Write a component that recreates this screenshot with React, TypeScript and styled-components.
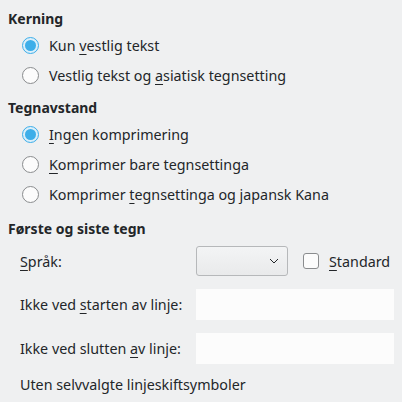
import styled, { createGlobalStyle } from 'styled-components';

const GlobalStyle = createGlobalStyle`
    html, body {
        margin: 0;
        padding: 0;
        background: #eff0f1;
    }
    body {
        font-family: "Noto Sans", "Open Sans", sans-serif;
        font-size: 14.3px;
        color: #232629;
    }
`

const Page = styled.div`
    display: flex;
    flex-direction: column;
    padding: 8px 8px 0 8px;
    width: 402px;
    box-sizing: border-box;
`
const Section = styled.section<{ $gap?: number }>`
    display: flex;
    flex-direction: column;
    margin-top: ${p => p.$gap ?? 0}px;
`
const Heading = styled.h3`
    margin: 0;
    height: 22px;
    line-height: 22px;
    font-size: 14px;
    font-weight: bold;
`
const RadioRow = styled.label`
    display: flex;
    align-items: center;
    height: 30px;
    padding-left: 14px;
    gap: 10px;
`
const RadioDot = styled.span<{ $checked?: boolean }>`
    width: 17px;
    height: 17px;
    border-radius: 50%;
    box-sizing: border-box;
    border: 1px solid ${p => (p.$checked ? '#3daee9' : '#8a8c8e')};
    background: ${p => (p.$checked ? '#dbeffa' : '#fcfcfc')};
    display: flex;
    align-items: center;
    justify-content: center;
    &::after {
        content: '';
        width: 11px;
        height: 11px;
        border-radius: 50%;
        background: #3daee9;
        display: ${p => (p.$checked ? 'block' : 'none')};
    }
`
const Key = styled.span`
    text-decoration: underline;
    text-underline-offset: 3px;
`
const Form = styled.div`
    display: grid;
    grid-template-columns: 176px 1fr;
    row-gap: 13px;
    padding-left: 12px;
    margin-top: 6px;
`
const FieldLabel = styled.span`
    display: flex;
    align-items: center;
`
const ControlRow = styled.div`
    display: flex;
    align-items: center;
    gap: 15px;
`
const Combo = styled.div`
    width: 92px;
    height: 30px;
    box-sizing: border-box;
    border: 1px solid #b6b8ba;
    border-radius: 3px;
    background: linear-gradient(#f3f4f5, #e9eaeb);
    display: flex;
    align-items: center;
    justify-content: flex-end;
    padding-right: 8px;
`
const CheckLabel = styled.label`
    display: flex;
    align-items: center;
    gap: 10px;
`
const CheckBox = styled.span`
    width: 16px;
    height: 16px;
    box-sizing: border-box;
    border: 1px solid #8a8c8e;
    border-radius: 3px;
    background: #fcfcfc;
`
const TextField = styled.div`
    height: 31px;
    background: #fcfcfc;
`
const Note = styled.p`
    margin: 10px 0 0 12px;
    height: 22px;
    line-height: 22px;
`

function App() {
    return (
        <Page>
            <GlobalStyle />
            <Section>
                <Heading>Kerning</Heading>
                <RadioRow><RadioDot $checked /><span>Kun <Key>v</Key>estlig tekst</span></RadioRow>
                <RadioRow><RadioDot /><span>Vestlig tekst og <Key>a</Key>siatisk tegnsetting</span></RadioRow>
            </Section>
            <Section $gap={7}>
                <Heading>Tegnavstand</Heading>
                <RadioRow><RadioDot $checked /><span><Key>I</Key>ngen komprimering</span></RadioRow>
                <RadioRow><RadioDot /><span><Key>K</Key>omprimer bare tegnsettinga</span></RadioRow>
                <RadioRow><RadioDot /><span>Komprimer <Key>t</Key>egnsettinga og japansk Kana</span></RadioRow>
            </Section>
            <Section $gap={9}>
                <Heading>Første og siste tegn</Heading>
                <Form>
                    <FieldLabel><span><Key>S</Key>pråk:</span></FieldLabel>
                    <ControlRow>
                        <Combo>
                            <svg width="10" height="6" viewBox="0 0 10 6">
                                <path d="M1 1 L5 5 L9 1" fill="none" stroke="#232629" strokeWidth="1" />
                            </svg>
                        </Combo>
                        <CheckLabel><CheckBox /><span><Key>S</Key>tandard</span></CheckLabel>
                    </ControlRow>
                    <FieldLabel><span>Ikke ved <Key>s</Key>tarten av linje:</span></FieldLabel>
                    <TextField />
                    <FieldLabel><span>Ikke ved slutten <Key>a</Key>v linje:</span></FieldLabel>
                    <TextField />
                </Form>
                <Note>Uten selvvalgte linjeskiftsymboler</Note>
            </Section>
        </Page>
    )
}

export default App;
